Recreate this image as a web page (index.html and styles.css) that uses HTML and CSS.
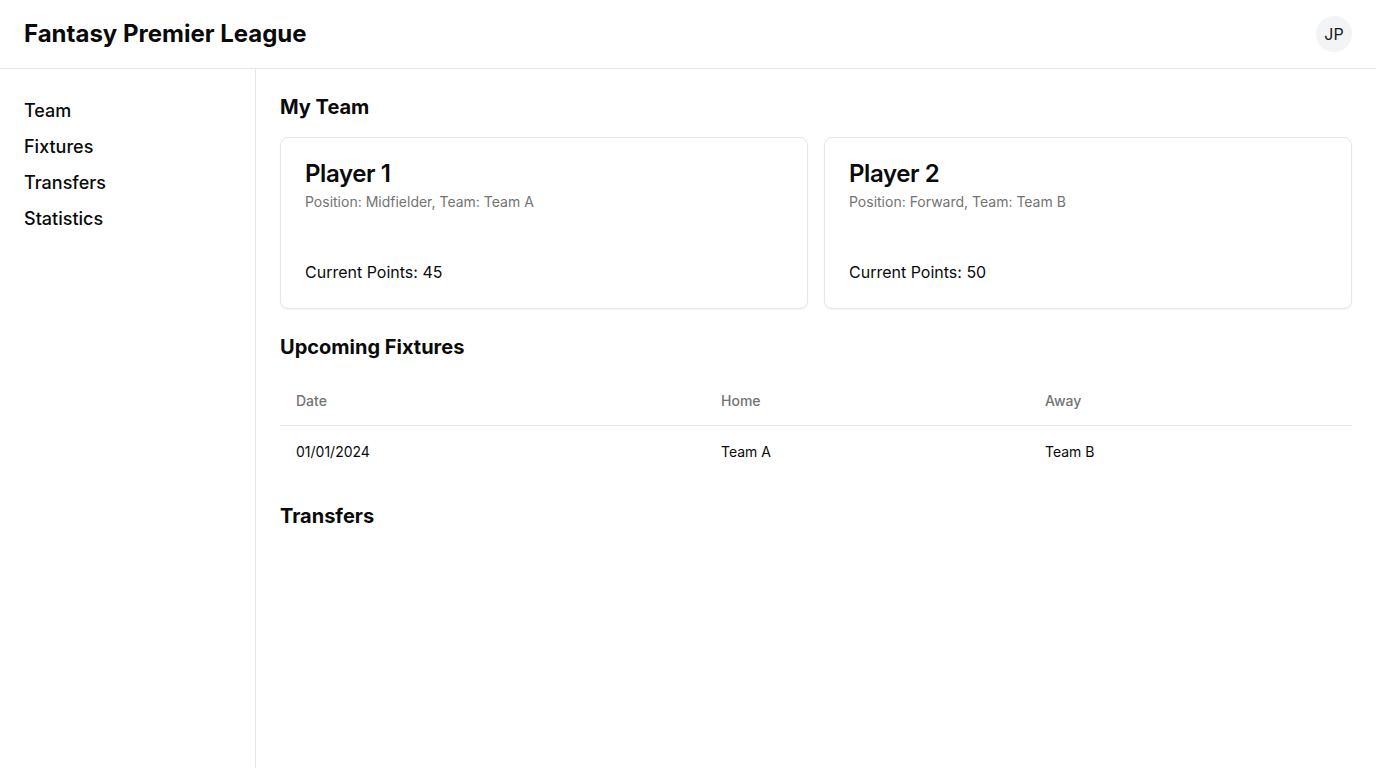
FILE: index.html
```html
<!DOCTYPE html>
<html lang="en">
<head>
<meta charset="utf-8">
<title>Fantasy Premier League</title>
<link rel="stylesheet" href="styles.css">
</head>
<body>
<header class="topbar">
  <h1 class="brand">Fantasy Premier League</h1>
  <div class="avatar">JP</div>
</header>
<div class="layout">
  <aside class="sidebar">
    <nav class="nav">
      <a class="nav-link">Team</a>
      <a class="nav-link">Fixtures</a>
      <a class="nav-link">Transfers</a>
      <a class="nav-link">Statistics</a>
    </nav>
  </aside>
  <main class="main">
    <section class="section">
      <h2 class="section-title">My Team</h2>
      <div class="cards">
        <div class="card">
          <div class="card-header">
            <h3 class="card-title">Player 1</h3>
            <p class="card-desc">Position: Midfielder, Team: Team A</p>
          </div>
          <div class="card-content">Current Points: 45</div>
        </div>
        <div class="card">
          <div class="card-header">
            <h3 class="card-title">Player 2</h3>
            <p class="card-desc">Position: Forward, Team: Team B</p>
          </div>
          <div class="card-content">Current Points: 50</div>
        </div>
      </div>
    </section>
    <section class="section">
      <h2 class="section-title">Upcoming Fixtures</h2>
      <table class="table">
        <thead>
          <tr class="head-row">
            <th class="col-date">Date</th>
            <th class="col-home">Home</th>
            <th>Away</th>
          </tr>
        </thead>
        <tbody>
          <tr>
            <td>01/01/2024</td>
            <td>Team A</td>
            <td>Team B</td>
          </tr>
        </tbody>
      </table>
    </section>
    <section class="section">
      <h2 class="section-title">Transfers</h2>
    </section>
  </main>
</div>
</body>
</html>
```

FILE: styles.css
```css
* { box-sizing: border-box; }
html, body { margin: 0; padding: 0; }
body {
  font-family: Inter, "Noto Sans", sans-serif;
  color: #0a0a0a;
  background: #fff;
  height: 768px;
  display: flex;
  flex-direction: column;
}
.topbar {
  display: flex;
  align-items: center;
  justify-content: space-between;
  padding: 16px 24px;
  border-bottom: 1px solid #e5e7eb;
}
.brand {
  margin: 0;
  font-size: 24px;
  line-height: 32px;
  font-weight: 700;
}
.avatar {
  width: 36px;
  height: 36px;
  border-radius: 50%;
  background: #f3f4f6;
  display: flex;
  align-items: center;
  justify-content: center;
  font-size: 16px;
  color: #171717;
}
.layout {
  flex: 1;
  display: flex;
  min-height: 0;
}
.sidebar {
  width: 256px;
  flex-shrink: 0;
  border-right: 1px solid #e5e7eb;
  padding: 24px;
}
.nav {
  display: flex;
  flex-direction: column;
}
.nav-link {
  font-size: 18px;
  line-height: 28px;
  padding: 4px 0;
  color: #0a0a0a;
  font-weight: 500;
}
.main {
  flex: 1;
  padding: 24px;
  display: flex;
  flex-direction: column;
  gap: 24px;
}
.section-title {
  margin: 0 0 16px;
  font-size: 20px;
  line-height: 28px;
  font-weight: 700;
}
.cards {
  display: grid;
  grid-template-columns: 1fr 1fr;
  gap: 16px;
}
.card {
  border: 1px solid #e5e7eb;
  border-radius: 8px;
  background: #fff;
  box-shadow: 0 1px 2px rgba(0,0,0,0.04);
}
.card-header {
  padding: 24px;
  display: flex;
  flex-direction: column;
  gap: 6px;
}
.card-title {
  margin: 0;
  font-size: 24px;
  line-height: 24px;
  font-weight: 600;
  letter-spacing: -0.4px;
}
.card-desc {
  margin: 0;
  font-size: 14px;
  line-height: 20px;
  color: #737373;
}
.card-content {
  padding: 24px;
  font-size: 16px;
  line-height: 24px;
}
.table {
  width: 100%;
  border-collapse: collapse;
  font-size: 14px;
}
.head-row { border-bottom: 1px solid #e5e7eb; }
.table th {
  height: 48px;
  padding: 0 16px;
  text-align: left;
  font-weight: 500;
  color: #737373;
}
.col-date { width: 425px; }
.col-home { width: 324px; }
.table td {
  padding: 16px;
  line-height: 20px;
}
```
